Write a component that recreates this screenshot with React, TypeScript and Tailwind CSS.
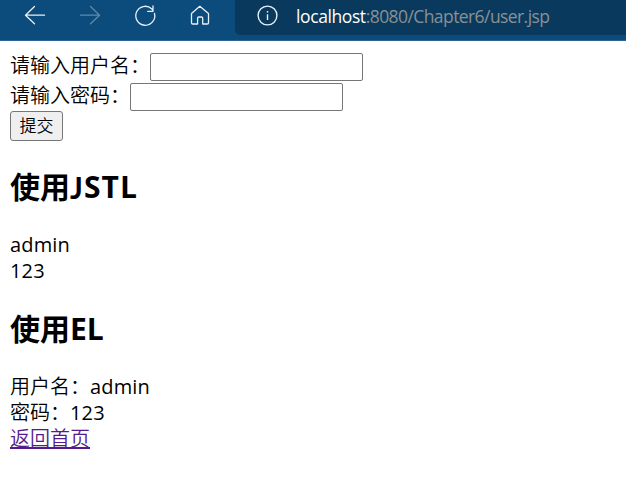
import type { ReactNode } from "react";

function Field({ label }: { label: string }) {
  return (
    <label className="flex h-[30px] items-start">
      <span className="mt-[-1px] font-[350] leading-[28px]">{label}</span>
      <input className="h-7 w-[213px] rounded-[2px] border border-[#767676] bg-white px-1 outline-none" />
    </label>
  );
}

function Heading({ children }: { children: ReactNode }) {
  return <h2 className="flex h-10 items-center text-[30px] leading-10 font-bold whitespace-nowrap">{children}</h2>;
}

export default function App() {
  return (
    <div className="h-[489px] w-[626px] overflow-hidden bg-white font-['Open_Sans','Noto_Sans_CJK_SC',sans-serif] text-[20px] leading-[26px] text-black">
      <header className="flex h-[41px] items-start border-b border-[#2f6593] bg-[#0c4c7c] text-[#e8eff5]">
        <svg className="h-10 w-[235px] shrink-0" viewBox="0 0 235 40" fill="none" stroke="currentColor" strokeWidth="1.3" strokeLinecap="round" strokeLinejoin="round">
          <path d="M44.5 15.2H25.5M34.5 6.5L25.5 15.2L34.5 23.7" />
          <path className="text-[#5f89aa]" stroke="currentColor" d="M80.5 15.2H99.5M90.5 6.5L99.5 15.2L90.5 23.7" />
          <path d="M154.5 13.5A9.5 9.5 0 1 1 151.6 8.7L153 10.5M153 5.8V11.3H147.7" />
          <path d="M191.5 13.4L199.8 6.3L208.5 13.4V22.8Q208.5 24 207.3 24H202.7V18.2Q202.7 17 201.5 17H198.8Q197.6 17 197.6 18.2V24H192.7Q191.5 24 191.5 22.8Z" />
        </svg>
        <div className="flex h-[35px] flex-1 items-start rounded-bl-[5px] bg-[#093a5e]">
          <svg className="ml-[22px] mt-[5px] h-[21px] w-[21px] shrink-0" viewBox="0 0 21 21" fill="none" stroke="currentColor" strokeWidth="1.4">
            <circle cx="10.5" cy="10.5" r="9.4" />
            <path d="M10.5 9.3V15" />
            <path d="M10.5 6V7.6" />
          </svg>
          <div className="ml-[18px] mt-[3px] text-[17.5px] leading-[26px] tracking-[-0.58px] whitespace-nowrap text-[#8b9094]">
            <span className="tracking-[-0.4px] text-white">localhost</span>:8080/Chapter6/user.jsp
          </div>
        </div>
      </header>
      <main className="px-[10px] pt-3">
        <Field label="请输入用户名：" />
        <Field label="请输入密码：" />
        <button className="mt-[-2px] flex h-[30px] w-[53px] items-center justify-center rounded-[3px] border border-[#767676] bg-[#efefef] text-[17px] font-[350] leading-[28px]">提交</button>
        <div className="pt-[26px]">
          <Heading>
            使用<span className="font-['Lato'] tracking-[1px]">J</span><span className="tracking-[1.1px]">STL</span>
          </Heading>
        </div>
        <div className="pt-[25px] tracking-[0.15px]">
          <p>admin</p>
          <p>123</p>
        </div>
        <div className="pt-[25px]"><Heading>使用EL</Heading></div>
        <div className="pt-[25px]">
          <p><span className="font-[350]">用户名：</span><span className="tracking-[0.15px]">admin</span></p>
          <p><span className="font-[350]">密码：</span><span className="tracking-[0.15px]">123</span></p>
          <p><a href="#" className="font-[350] text-[#551a8b] underline decoration-2 underline-offset-1">返回首页</a></p>
        </div>
      </main>
    </div>
  );
}
